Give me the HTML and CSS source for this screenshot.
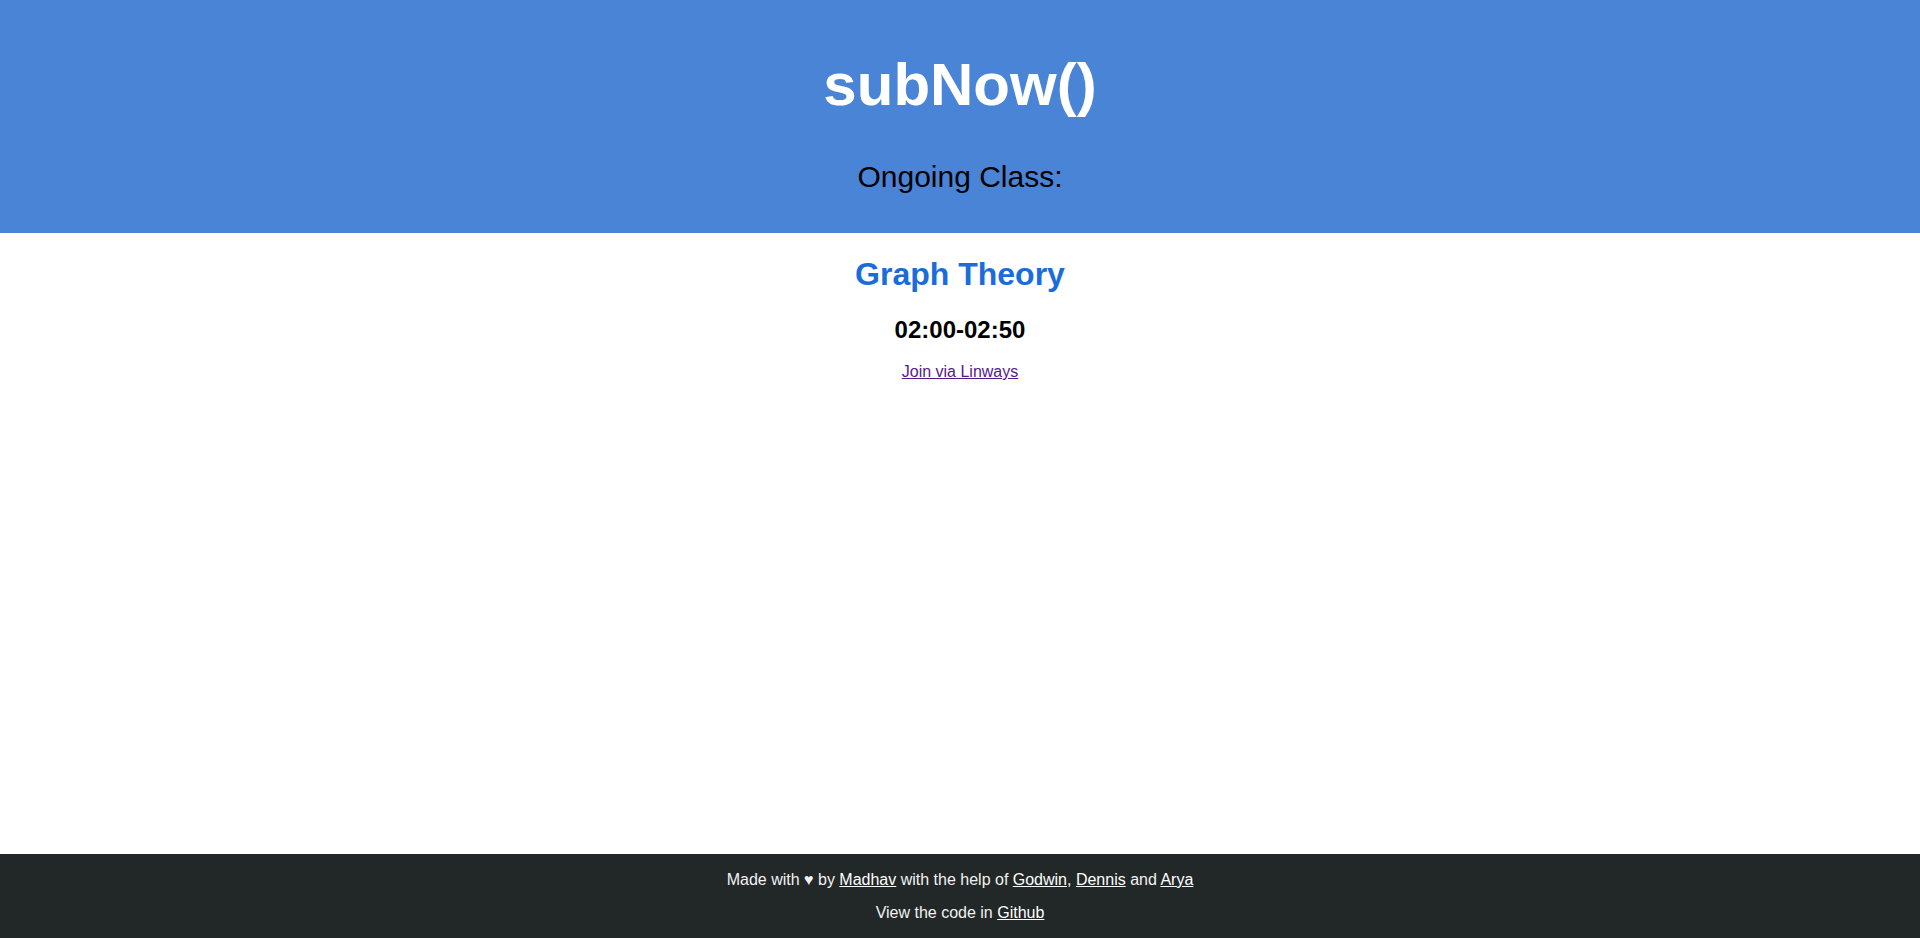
FILE: index.html
```html
<!DOCTYPE html>
<html lang="en">
<head>
<meta charset="utf-8">
<title>subNow()</title>
<link rel="stylesheet" href="styles.css">
</head>
<body>
<div class="page">
  <header class="header">
    <h1 class="brand">subNow()</h1>
    <p class="ongoing">Ongoing Class:</p>
  </header>
  <main class="main">
    <h1 class="subject">Graph Theory</h1>
    <h2 class="time">02:00-02:50</h2>
    <a class="join" href="#">Join via Linways</a>
  </main>
  <footer class="footer">
    <p class="foot-line">Made with &#9829; by <a href="#">Madhav</a> with the help of <a href="#">Godwin</a>, <a href="#">Dennis</a> and <a href="#">Arya</a></p>
    <p class="foot-line second">View the code in <a href="#">Github</a></p>
  </footer>
</div>
</body>
</html>
```

FILE: styles.css
```css
html, body {
  margin: 0;
  padding: 0;
}
body {
  font-family: "Liberation Sans", Arial, sans-serif;
  background: #ffffff;
  color: #000;
}
.page {
  min-height: 100vh;
  display: flex;
  flex-direction: column;
}
.header {
  background: #4a84d6;
  text-align: center;
  height: 233px;
  box-sizing: border-box;
  padding-top: 50px;
}
.brand {
  margin: 0;
  font-size: 60px;
  font-weight: bold;
  color: #ffffff;
  line-height: normal;
}
.ongoing {
  margin: 41px 0 0;
  font-size: 30px;
  line-height: normal;
  color: #000;
}
.main {
  flex: 1;
  text-align: center;
  padding-top: 23px;
}
.subject {
  margin: 0;
  font-size: 32px;
  font-weight: bold;
  color: #1a6dd9;
  line-height: normal;
}
.time {
  margin: 23px 0 0;
  font-size: 24px;
  font-weight: bold;
  line-height: normal;
}
.join {
  display: inline-block;
  margin-top: 19px;
  font-size: 16px;
  color: #551a8b;
  text-decoration: underline;
}
.footer {
  background: #222727;
  color: #f2f2f2;
  text-align: center;
  height: 84px;
  box-sizing: border-box;
  padding-top: 17px;
  font-size: 16px;
}
.foot-line {
  margin: 0;
  line-height: normal;
}
.foot-line.second {
  margin-top: 15px;
}
.foot-line a {
  color: #ffffff;
  text-decoration: underline;
}
```
